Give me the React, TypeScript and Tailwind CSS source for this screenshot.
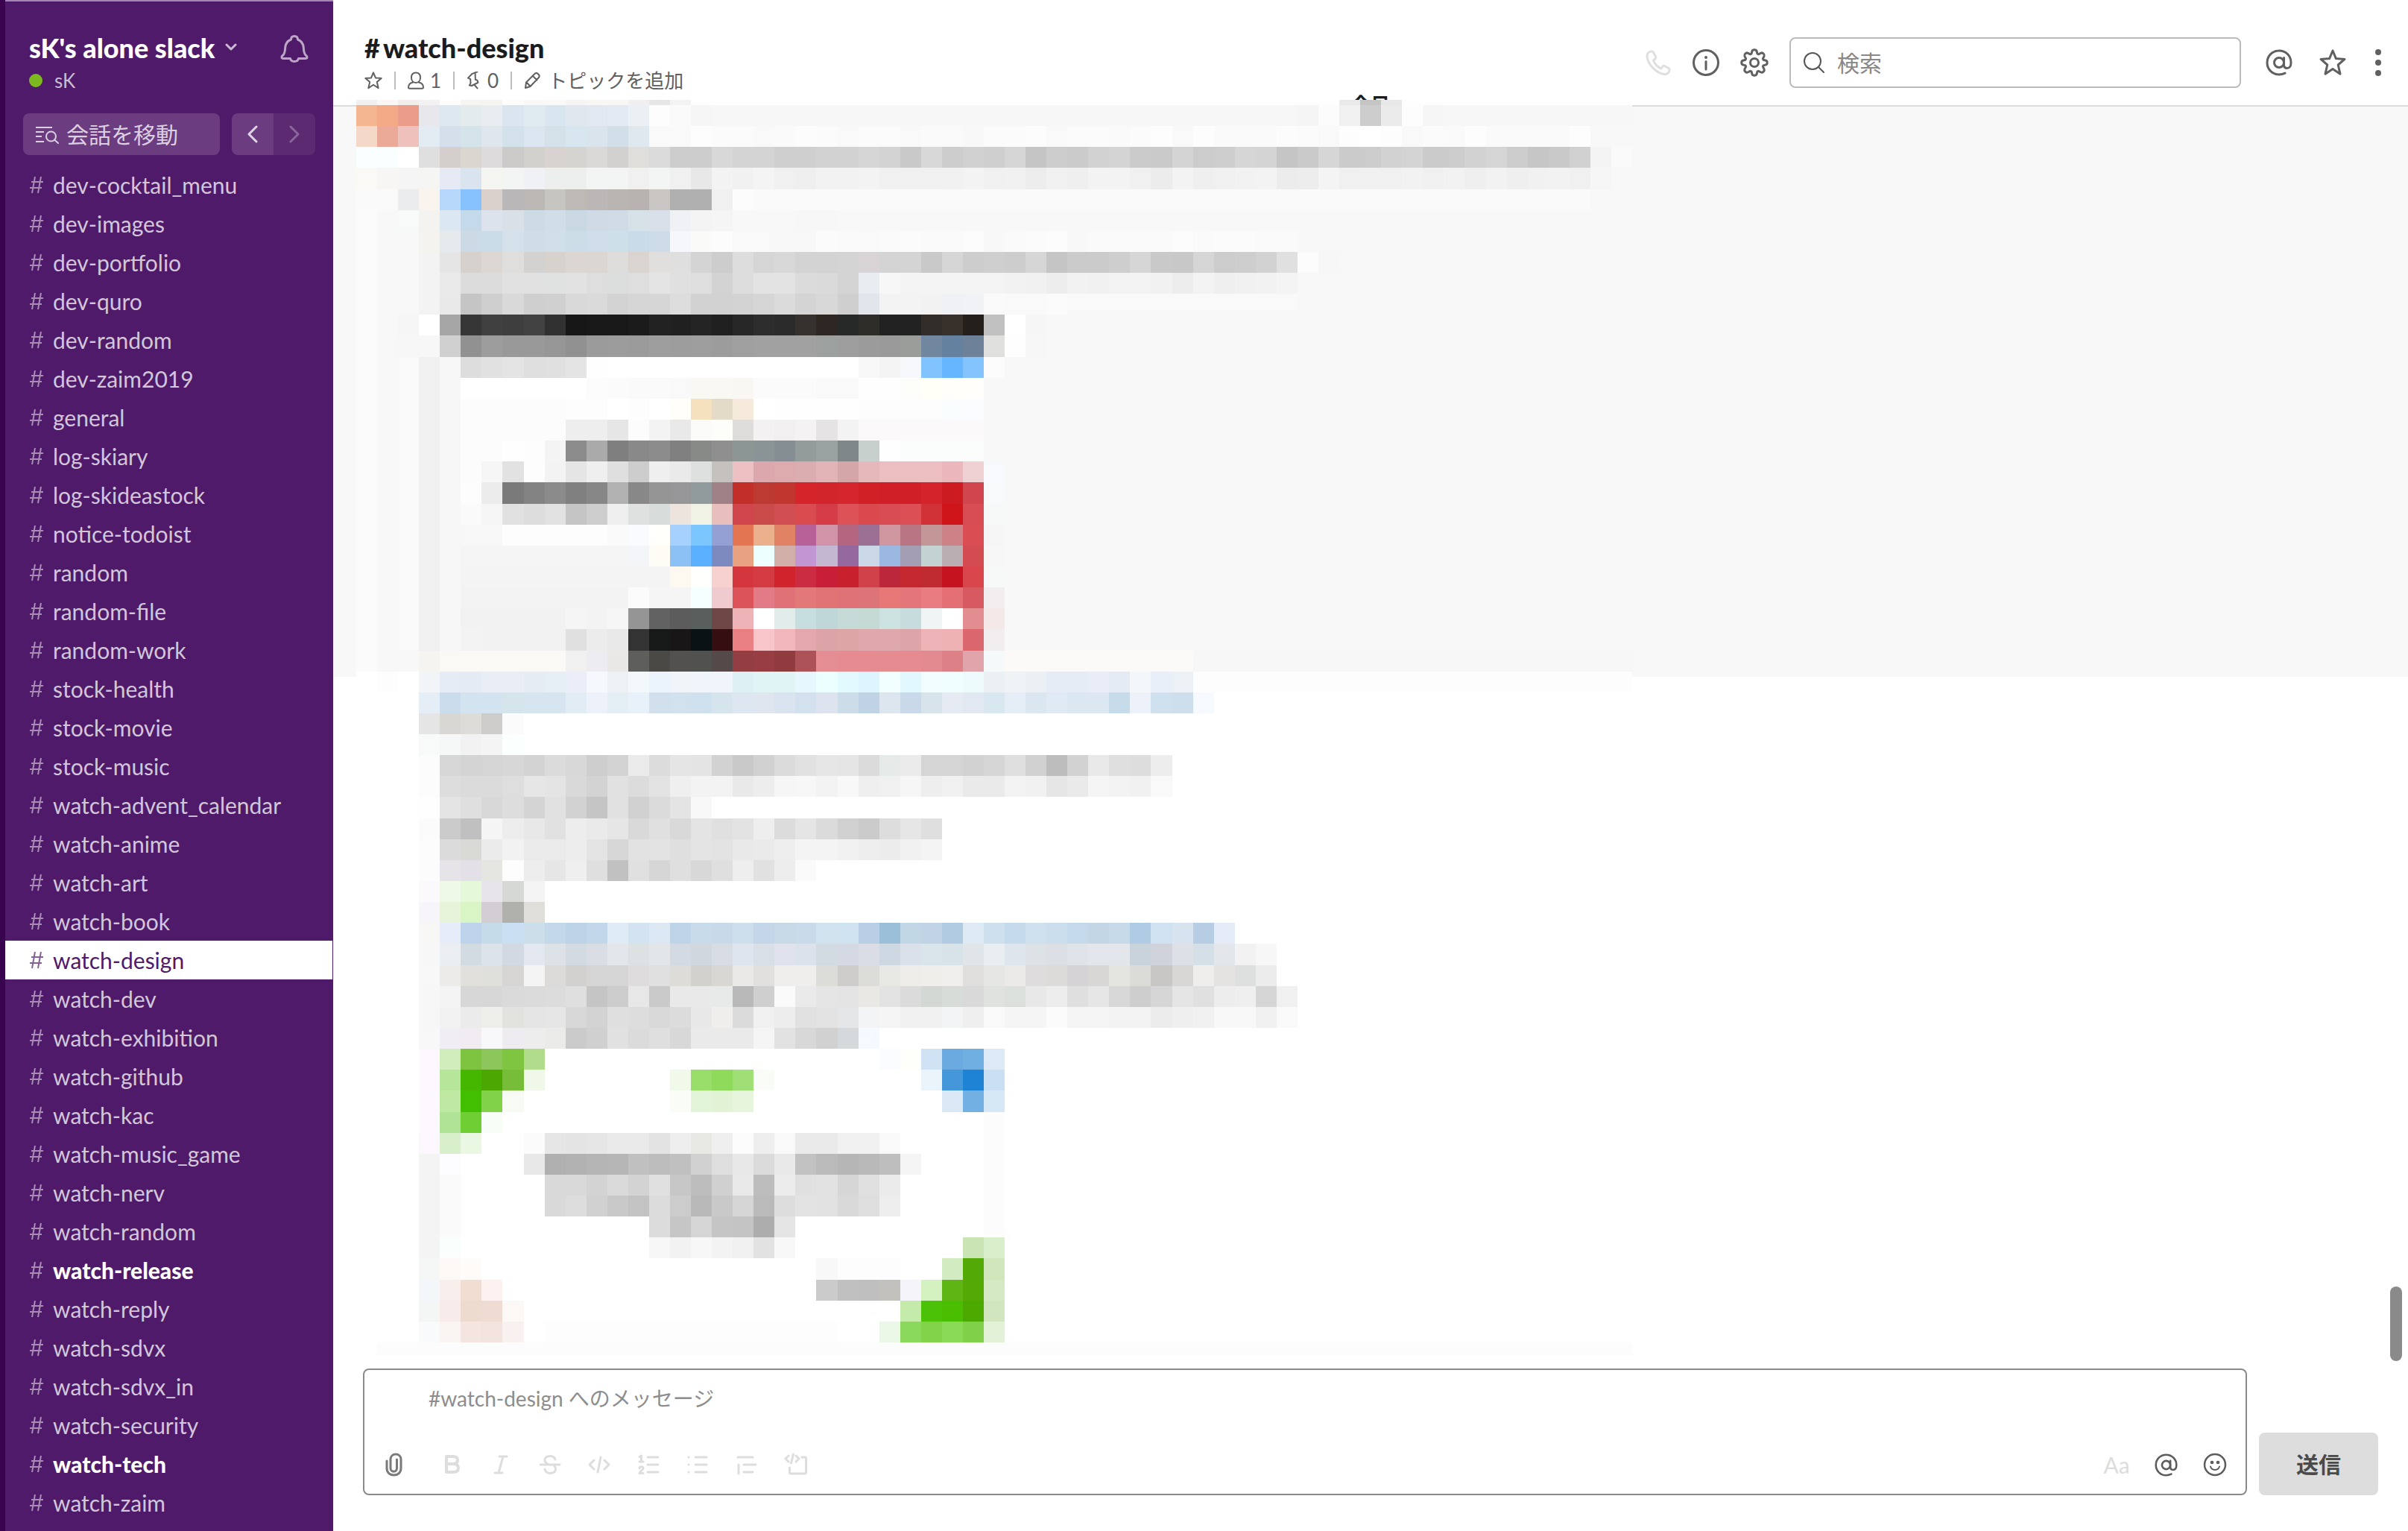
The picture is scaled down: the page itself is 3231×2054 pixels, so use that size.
import React from 'react';

const FONT = "font-['Lato','Noto_Sans_CJK_JP',sans-serif]";

const channels: { name: string; unread?: boolean; active?: boolean }[] = [
  { name: 'dev-cocktail_menu' },
  { name: 'dev-images' },
  { name: 'dev-portfolio' },
  { name: 'dev-quro' },
  { name: 'dev-random' },
  { name: 'dev-zaim2019' },
  { name: 'general' },
  { name: 'log-skiary' },
  { name: 'log-skideastock' },
  { name: 'notice-todoist' },
  { name: 'random' },
  { name: 'random-file' },
  { name: 'random-work' },
  { name: 'stock-health' },
  { name: 'stock-movie' },
  { name: 'stock-music' },
  { name: 'watch-advent_calendar' },
  { name: 'watch-anime' },
  { name: 'watch-art' },
  { name: 'watch-book' },
  { name: 'watch-design', active: true },
  { name: 'watch-dev' },
  { name: 'watch-exhibition' },
  { name: 'watch-github' },
  { name: 'watch-kac' },
  { name: 'watch-music_game' },
  { name: 'watch-nerv' },
  { name: 'watch-random' },
  { name: 'watch-release', unread: true },
  { name: 'watch-reply' },
  { name: 'watch-sdvx' },
  { name: 'watch-sdvx_in' },
  { name: 'watch-security' },
  { name: 'watch-tech', unread: true },
  { name: 'watch-zaim' },
];

/*
 * Pixelated message contents. Each string is one row of cells:
 * "xx" is a grey level, "xxxxxx" a colour, "_" an empty cell,
 * "*n" repeats a cell and "@n" jumps to column n.
 */
const L = 'fb f8 f9 f0 f7';
const topRow =
  'f0 f8f7f5 f2eeeb f3f1f2 fe f6f5f2*2 fdfdfb f8f8f9 faf8f8 f6f4f4 f9f7f4*2 f1eff0 e7 f3 fe*31 ea c5 e8 fe*11';
const rows: string[] = [
  'f3b691 f4aa86 ec9d8a e8e8ec dde8f1 e4ebed e8edf1 dae5ef dfebf0 d9e5ef e0e7ef e1e8f1 e3eaf3 ebf0f4 fd fa f6 f7*28 f5 fc f0 cd eb fd f6 f7*9',
  'f5d9c8 ebaa98 eec1bc e4ecf3 d4dfeb d5e3eb dfe6ee d3e2ea dbe6f0 d4e1e9 d8e6ef d9e4ec d2dfe8 dfe7ef f9*2 fd fb*2 f9 fa fc fb f9 fb*2 f9 fa*2 f8 fb*2 fc f9 fb*2 fa fb fd f9 fd fa*3 fc fb f9 fd ff fd f9 fb fa fd fa*4 fd',
  'f9ffff*2 ff df d4cfcc dad7d1 dddbdc cccbc9 d2d1ce d8d2d1 d5d4d1 dad9d7 d2d1cf dfdedb db cd*2 d8 d4*2 cf*2 d2*2 d6 d3 c9 d8 cd d1 cf d6 c5 cd cb d2 d4 cb ca d4 cc ce d6 d4 c5 ca d6 cb cc d2 d4 cb cc d2 d5 cc c6 c9 d1 f4 fa',
  'faf9f6 f8f6f4 f5 f5f5f3 e6eaf4 dae4ef f5f5f2 f3f5f4 f0f1f4 edefee*2 f3f5f4*2 f0 f3f5f4 f0 e8 f3 f1 f4 f0 ef f2*2 f3 f0*3 f1 f3 f0 f1 ed f1 ef f3*2 f0 ec f3 ef f0 f2 f3 ec ed f4 f0*3 f2 f0 f2 ef f2 ef f1 f2 f0 f6',
  'fa*2 ebecee f9f4ed b7d7fb 87c2ff dad1cc b9b7b8 bbb8b6 c6c5c2 bdb9b5 bbb7b6 b9b5b3 b8b3b1 cac6c4 b0*2 f0 fc fa*40',
  'fb f8 f8faf9 f4f3ef dce8f1 c4daeb dce3ec dae0e8 cddbe4 d1dee8 cad8e4 d0dae4 d1dbe5 d6e1e8 d9e0e9 eff1f4 f4 f5 f8*3 f7*2',
  'fb f8*2 f4f3ef e5eaed cbdae5 c9dce8 d4e1eb cfdde9 d1dfe8 ccdde7 d0deec cddfe9 c9dae8 cedcea f5f7fb fafaf8 fc f9*2 f8*2 fb fa f9 fa fb fa*2 fc f8 fa fb fc f8 fa*4 fc fa fb*2 fa*2',
  'fb f8*2 f3 e5 d6d1cd dcd7d3 dfdedc d3d2d0 d8d2cf dbd6d2*2 dfdddb dad4d1 e1dfdd df d4 cd dd d5 d8 d3*2 d4 d8d3d5 d4*2 c9 d6 cd cf cd d6 c5 cb*2 ce d6 c9 c8 d5 cc ce d2 e0 fc f7',
  'fb f8*2 f3 ea dc*2 e1*2 e0e2e1 e2 de dcdedd de e4 e0 de d3 dd e3*2 db da d4 e8edf1 f7 f4*5 f2 f1 ed f2 f1 f3*2 f1 ed f3 ef f1 f2 f4',
  'fb f8*2 f3 e9 c5 cf d9 cf d0 d9 da d3 d6*2 dd d2*2 d3 d6 db d4 d8 cf e0e6eb f3*2 f2 eff1f4 f0f2f5 fa f9*2 fb f9*11',
  'fb f8 f6 ff a6 36 40 3e 42 31 17 18*2 1b 22 20 24 20 27 2d 2b 36302f 2e2623 272928 2e2d2a 22*2 332d29 38312b 251f1b c1 ff f6',
  'fb f8 f7*2 d0 91 9d 99*2 96 91 9b 9c 9b 9e 9d 9e 9c 9f a1*3 9ca09e 9e 9b 9a 9b9d9a 7187a0 6482a0 6d8199 e0e0de fe f7',
  L + ' dd e1 e4 de e0 e4 fe ff*12 f8 f4 f6f8fb 81c3ff 66b6ff 83c4ff fc f8',
  L + ' ff*6 fc fb fa*2 f9 f9f8f3 f9f8f2 f8f7f4 fb*3 f9*2 fe*2 fdfdfa fffff8 fffefa*2',
  L + ' fc*5 fd*2 ff fd ff fffef8 f5e1bd e4dac8 f5eadc ff fe*4 fd*4 fafdfd fafcff',
  L + ' fc*5 ee*2 e6 fc f3 e9 fbfcf9 fdfdfa dedddb f3f1f2 f1eff0 f4f2f3 e5e3e4 f4f3f4 fbf9fa*6',
  L + ' fc*2 fe fd f4 8c aa 7f 89 8c 80 888a87 8f 8c9694 8a9497 858e92 939c9a 9aa2a1 7f8789 c8d0ce fe fbfdfc*4',
  L + ' fc f6 e2 fd f3 e5 ef df cd ef ea dde0de c5c1bf edc1c4 dda8ad ddaaae dcadb0 e2b4b7 d4a6a9 e7b8bb ecbec1*3 ecb7bc efd0d3 f7f9fd',
  L + ' fd ec 7a 83 8b 80 87 b1 88 95 969698 919a9d a08187 c22f29 bd3a33 c1372f d5242a d2242b d5262d d12127 d01f27*2 d4232b cc1b21 d1464e f7f9fb',
  L + ' fa f6 e1 dd e2 c5 ce ef dfe0e0 d8dcda ece4dd f0f2e6 e8bfbd d1454d cb4a4a d14e53 d94b4e d63c47 dc5257 d9494e d94c53 db4f55 d13237 d0151a d84c53 f7f9f8',
  L + ' f8*2 fd*5 fa fafbff fffffb a6d1ff 7cc6ff 949fd3 e37553 ebb08c e08263 b86199 d193a7 b4657f 9c6f94 d0969f b97583 c39697 cd8288 da4d53 f6',
  L + ' f5*8 f3f5f8 fffbf5 8cc1f6 5ab0ff 7c8abf e9a281 edffff d3afaa c196d1 c3b7d1 9568a0 cad7e6 9bb8e3 a49eb4 c3d3d1 bbaeb3 d24c51 f7',
  L + ' f4*10 fdf9f1 fffffd f6d1cd d4363d d43a41 d0232c cb2c42 c81e37 c8202c d04149 bc273b c5272e be2a30 c5141f d8464c f7f9f9',
  L + ' f3*8 fb f5*2 f5ffff efcace dc535a e27b85 e07176 e37878 e17374 df7276 dd7479 e77877 e4767b e87c80 e47076 d75a60 f2eef0',
  L + ' f2*5 f5 f3 f6 95 62 5c 585f5d 6e4746 edb3b7 ff e1eceb c7dee0 bfd7d8 c6dad8 c5d9d5 cde3e1 c6dcdd eff4f5 ff e28d90 f5e8e8',
  L + ' f3 f2*4 e0 ec e9 33 171918 181617 0a1213 340e10 e97f83 f8c5cb f2b7bc e4a8ac dda4a7 dda5a6 e0a8ab dfa8ab dda5a7 eeb3b6 eeb1b4 da666e f2eef0',
  'fb f8*2 f6f4f1 fbf9f6*6 f0 ededf1 e9e8e6 5e5e5c 4a4946 53514f 51524f 554a49 923e42 983e43 903b3d ad5358 e48e93 e68c91*4 e28a8f de8186 e2a4ab f5f9fa fbfaf8*9 f7*21',
  'ff fd ff f1f5f7 e5ecf5 e5ebf4 e8edf6*2 e5ecf4 e6eef6 ebeef9 f5f8fc edf1f6 f3f8fb ebf3fc f0f5f9 eff5fa*2 ddf1f4 e0f4f6*2 e6f7fe ecffff e1f9ff dcf5fe f1ffff e2f8ff f1fcff f1feff eefbfd ebf0f5 eff3f6 ebf0f4 e6ecf6*2 e9edf8 e4ebf4 f4f7fa e8eff8 ebf1f5 fd*21',
  '@3 e5eef7 cbddec d3e3f0 d3e3ef d6e4ec d6e5ef*2 e2ecf5 ecf1fa e3eef5 e8f0f9 d1e0ec d1e1ed cfe0ee d6e4ed dde6f1 e0e6f0 d9e4f0 d2e1ed dde4ef cddce9 bfd3e5 dde5ee c9d9e9 d8e4ec e6eaf3 e1e8f1 d9e7f1 e5edf6 dae7f1 dfeaf5 dbe8f1*2 c7dceb edf2fa cfe0ef cddfec f6fafe',
  '@3 e5 d9d7d4 dddcd9 cdccca fb',
  '@3 f7faf9 f6f8f7 f2 f4 fbfffe',
  '@3 fc d7 d4 d5 d7 d3 db d8 ce d3 eb dc e5 e4 d2 c9 d1 db e1 e6 e5 db e6eae8 eb d5*2 d2 d6 df d1 bd d2 e9 df dd ed',
  '@3 fc dd db*2 de e6 e4 d9 d3 e1 dc e3 ef f3*2 e9 ed f6 f7 f3 f8 ef f0 f6 ee f1 ea*2 f3 f1 e6 ea f5 f3 f1 f9',
  '@3 fe e4 df d8 dd d4 e1 d2 c5 e1 d1 db e4 f8',
  '@3 fb cb c0 f5 ed e8 e1 ed ea e6 d9 e0 d9 e4 e0 e3 ee dc e5 db d1 cb dd e6 df',
  '@3 fc db d9d9d5 eb f2 eb*2 ed e4 d7 e2 e3 df e4 e3 e9 ea ee f4*2 f1 ee ec f1 f4',
  '@3 fc e6e4e8 e3e1e7 e5e5e2 fd ed e6 ef df c1 e0 d6 df d8 df ee e1 ed fa',
  '@3 fbf9fc eff9e8 e5f9da e7e5ea d6d8d6 f4',
  '@3 f8f5fa e7f4da daf5c5 d3ced4 b0b0ad dfdedb',
  '@3 f8f7f5 e7edf8 bed3ec c5dbea cbdff3 cbdeea c3d8e8 bdd3e8 c2d7e9 dfebf5 d4e3f1 dce9f4 bed5e9 c8dbeb c8daea cddeed c3d7e9 c7d9e7 c9daea cfe2ee cfe2f0 b9cfe5 9bbfd9 c1d7e6 c0d4e5 b1cce2 ddeaf4 cedfed c5daeb cfe1ee cbdeed c4d9e9 c2d6e6 c6daea b0cce4 d0e2f1 d7e4ef b7cde3 e5ecf7',
  '@3 f7 ebeef2 d2dae2 dce3ea d2d9e2 e3e7f0 dde2e7 d3dae2 dadde3 e3e7eb dce1e3 e3e6e9 d3dae3 d0d7df d7dce5 dee5ee d9dfe7 e0e3ed dce2eb d2dae2 d5d9e3 dadde6 cdd8e2 dae1ea dae5eb d7e2e9 dfe5e9 e9eef2 dee5ed dde2e6 dce0e4 e0e4e9 e3e7eb*2 c8d3dc d0d3dc dde1e7 d5dfe8 e3e6ea f2 f7',
  '@3 f8 edebe9 e1e0dd dfdfdc d6d5d3 f4 dcdbd9 d2d1cf d5 d6 dfdcde e0 dddcd9 d2d1ce d8d7d4 eae9e7 e1e0de efeeec*2 dcdcd8 cecdcb dcdcd8 e7e7e4 eeedea efeeeb f0efed dfdedc e6e7e4 ebeae8 dfdcde dcdbda d6d3d6 d8d7d6 e4e4e1 dbdbd8 c8c7c5 d9d7d6 efeeec e4e3e1 dedfdf ec',
  '@3 f7 f4 d7*2 da db dc df c5 cd e7 ca e9*2 e7eae8 b9 cf fa ea e5 e4 e9e8e4 e3 db d4d8d5 d8dcd9 d9 dfe2df dce0dd e8 ed df e6 d8 ce d6 e5 e0 ed ef d6 f0',
  '@3 f7 f2 eb eeeeea e2e2de e5 e6 d8 d3 df dd d9 dc e8 efeeec db f0 ed e1 e3 e4e6e8 f2f4f6 f5 f1*2 f2f4f6 ef f9 f5*2 fb f5*2 f3*2 ec ef f1 f8*2 f1 f9',
  '@3 f8 f0eef4 f1ebf2 f8f8fb eeebf1 ed ebebe9 cb d0 e1 db df d8 ea*3 f5 e2 d8 d1 d5d9dc f4faff',
  '@3 fdf8ff d1edbb 7ec441 8dc65a 7fc542 b0dc8b @25 fafcff fefffa cfe3f4 6aaae0 70afe1 dbeaf6',
  '@3 fdf8ff b5e699 45b700 4aa800 77bd3a f0f8e9 @15 f1f9ea 99dd6a 8fd95b a0de76 fafdf7 @27 ebf3fb 4498da 1f83d5 c9e0f4',
  '@3 fdf8ff bfe8a3 41bf00 81d249 f7fbf3 @15 fafdf7 e3f5d8 e1f3d4 e8f5dd @28 dbe9f6 72afe3 d6e7f5',
  '@3 fdf8ff b0e395 70ce35 f7fdf7 @30 fc',
  '@3 fcf7fd d9efcb eaf7e2 @8 fb e6 e4 e6 ea*2 e3 ee e8e8e5 ef fc ee f9 ea*2 f1 f0 f9 @30 fc',
  '@3 f4 fdfdff @8 e8 b0 b2 b5 b6 c0 bd c0 d1 de e8 db e9 c2 ba b6 b9 be f5 @30 fc',
  '@3 f4 fa @9 d9*2 d3 da d3 e0 c7 bd d0 e9 bd ec e0 e2 d6 e0 eb @30 fc',
  '@3 f4 fa @9 d9 dd d1 c9 c3 dc cc b9 c9 d5 ba dd e3 e2 d9 de ee @30 fc',
  '@3 f4 fa @14 dc c6 d5 c5 c4 ad e5 @30 fc',
  '@3 f4 fafefd @14 f7 f2 f7 f3 f0 e2 f8 @29 cbe4b4 d9eeca',
  '@3 f5f7f6 fdf9f7 fefbf9 @22 f8 fd*3 @28 d3ebc0 53aa07 d0e7bb',
  '@3 f4f7f9 f8eeeb f2ddd2 fdf2ef @22 cb c0 bf c2c1be f6f4fb d3f2bf 5fb514 55a905 d6e9c5',
  '@3 f4f6f5 f7ecea eedbd0 f0dbd2 fcf8f5 @26 c5ebaa 4bc107 4abe00 4ca900 d1e6bf',
  '@3 f8fafc f9f5f2 f4e5e1 f2e3df f9f1ef @9 fd*14 @25 ecf8e7 8bd95c 82d34a 8ada57 81d049 e3f1d7',
];

type Cell = { col: number; span: number; fill: string };

function parseRow(row: string): Cell[] {
  const cells: Cell[] = [];
  let col = 0;
  for (const token of row.split(' ')) {
    if (token[0] === '@') {
      col = Number(token.slice(1));
      continue;
    }
    const [value, times] = token.split('*');
    const span = times ? Number(times) : 1;
    if (value !== '_') {
      cells.push({ col, span, fill: '#' + (value.length === 2 ? value + value + value : value) });
    }
    col += span;
  }
  return cells;
}

const colX = (c: number) => Math.round((c * 1712) / 61);
const rowY = (r: number) => 7 + Math.round((r * 1660) / 59);

function MosaicRow({ row, y, height }: { row: string; y: number; height: number }) {
  return (
    <g>
      {parseRow(row).map((c) => (
        <rect key={c.col} x={colX(c.col)} y={y} width={colX(c.col + c.span) - colX(c.col)} height={height} fill={c.fill} />
      ))}
    </g>
  );
}

function Mosaic() {
  return (
    <svg
      role="img"
      aria-label="メッセージ"
      width="1712"
      height="1684"
      viewBox="0 0 1712 1684"
      shapeRendering="crispEdges"
      className="relative -mt-[9px] ml-[31px] block shrink-0"
    >
      <MosaicRow row={topRow} y={0} height={7} />
      {rows.map((row, r) => (
        <MosaicRow key={r} row={row} y={rowY(r)} height={rowY(r + 1) - rowY(r)} />
      ))}
      <MosaicRow row="@1 fc*60" y={1667} height={17} />
    </svg>
  );
}

type IconProps = { children: React.ReactNode; w?: number; h?: number; sw?: number; className?: string };

function Icon({ children, w = 36, h = 36, sw = 3, className = '' }: IconProps) {
  return (
    <svg
      aria-hidden="true"
      width={w}
      height={h}
      viewBox={`0 0 ${w} ${h}`}
      fill="none"
      stroke="currentColor"
      strokeWidth={sw}
      strokeLinecap="round"
      strokeLinejoin="round"
      className={`block shrink-0 ${className}`}
    >
      {children}
    </svg>
  );
}

const StarPath = () => (
  <path d="M18 2l4.4 10.6L34 13.4l-8.8 7.6 2.8 12.2L18 26.600l-10 6.600 2.800-12.200L2 13.400l11.600-.8z" />
);

const AtPath = () => (
  <>
    <circle cx="18" cy="18" r="6.500" />
    <path d="M24.500 11.500v9.500c0 3 1.800 4.500 4.300 4.500 3.200 0 5.200-3 5.200-7.500C34 8.800 27 2 18 2S2 9 2 18s7 16 16 16c3 0 5.500-.6 8-1.900" />
  </>
);

function HashIcon() {
  return (
    <Icon w={20} h={26} sw={2}>
      <path d="M8 2L4 24M16 2l-4 22M3 9h16M1 17h16" strokeLinecap="butt" />
    </Icon>
  );
}

function Sidebar() {
  return (
    <aside className="flex w-[447px] shrink-0 flex-col overflow-hidden border-l-[7px] border-[#3a0350] bg-[#4f1a69] shadow-[inset_0_2px_0_#a287b0]">
      <div className="flex h-[152px] shrink-0 items-start justify-between pt-10 pr-8 pl-8">
        <div>
          <button type="button" className="flex h-12 items-center gap-3.5 text-4xl font-black text-white">
            <span className="whitespace-nowrap">sK's alone slack</span>
            <Icon w={16} h={12} sw={3} className="text-[#cabad2]">
              <path d="M2 2l6 6 6-6" />
            </Icon>
          </button>
          <div className="flex h-10 items-center gap-4 text-[26px] text-[#cabad2]">
            <span className="size-[18px] rounded-full bg-[#7cba1f]" />
            <span>sK</span>
          </div>
        </div>
        <button type="button" aria-label="通知" className="mt-1.5 text-[#bba6c6]">
          <Icon w={40} h={40} sw={3}>
            <path d="M15.500 7c0-3 1.800-4.500 4.500-4.500s4.500 1.500 4.500 4.500C29.500 9 32 13 32.300 18c.3 6 .9 8.500 3.200 10.200 2 1.500 2.500 4.300-1 4.300h-9c-.6 2.700-2.500 4-5.500 4s-4.900-1.300-5.500-4h-9c-3.500 0-3-2.800-1-4.300C6.800 26.500 7.400 24 7.700 18 8 13 10.500 9 15.500 7z" />
          </Icon>
        </button>
      </div>

      <div className="flex h-14 shrink-0 gap-4 pr-6 pl-6">
        <button type="button" className="flex flex-1 items-center gap-2.5 rounded-lg bg-[#6b3c7f] pl-4 text-[30px] text-[#dccfe2]">
          <Icon w={32} h={28} sw={2}>
            <path d="M1 5h22M1 11h11M1 17h8M1 24h11" strokeLinecap="butt" />
            <circle cx="21.500" cy="17" r="6.500" />
            <path d="M26 21.500l5 4.500" />
          </Icon>
          <span className="whitespace-nowrap">会話を移動</span>
        </button>
        <div className="flex overflow-hidden rounded-lg">
          <button type="button" aria-label="戻る" className="grid w-14 place-items-center bg-[#6b3c7f] text-[#e0d5e5]">
            <Icon w={14} h={24} sw={3}>
              <path d="M12 2L2 12l10 10" />
            </Icon>
          </button>
          <button type="button" aria-label="進む" className="grid w-14 place-items-center bg-[#5c2a71] text-[#88659a]">
            <Icon w={14} h={24} sw={3}>
              <path d="M2 2l10 10L2 22" />
            </Icon>
          </button>
        </div>
      </div>

      <nav aria-label="チャンネル" className="mt-3.5">
        <ul>
          {channels.map((c) => (
            <li key={c.name}>
              <a
                href="#channel"
                aria-current={c.active ? 'page' : undefined}
                className={
                  'mr-px flex h-[52px] items-center gap-3 pl-8 text-[30px] whitespace-nowrap ' +
                  (c.active
                    ? 'bg-white text-[#4f1a69]'
                    : c.unread
                      ? 'font-black text-white'
                      : 'text-[#d3c6da]')
                }
              >
                <span className={c.active ? 'text-[#84609a]' : 'text-[#a78cb5]'}>
                  <HashIcon />
                </span>
                <span>{c.name}</span>
              </a>
            </li>
          ))}
        </ul>
      </nav>
    </aside>
  );
}

function Divider() {
  return <span className="mx-4 h-6 w-0.5 shrink-0 bg-[#bdbdbd]" />;
}

function Header() {
  return (
    <header className="flex h-[143px] shrink-0 items-start justify-between border-b-2 border-[#dddddd] pr-[30px] pl-[42px]">
      <div className="pt-10">
        <h1 className="flex h-12 gap-1 text-4xl/[48px] font-black text-[#1d1c1d]">
          <span>#</span>
          <span>watch-design</span>
        </h1>
        <div className="flex h-10 items-center text-[26px] text-[#616061]">
          <button type="button" aria-label="スターを付ける">
            <svg aria-hidden="true" width="24" height="24" viewBox="0 0 36 36" fill="none" stroke="currentColor" strokeWidth="3" strokeLinejoin="round">
              <StarPath />
            </svg>
          </button>
          <Divider />
          <button type="button" className="flex items-center gap-2">
            <Icon w={22} h={24} sw={2}>
              <path d="M11 1.500c4 0 6 2.700 6 6.500s-2.300 7-6 7-6-3.200-6-7 2-6.500 6-6.500zM7 14.500C3 15.500 1 18 1 21c0 1.200.6 1.800 1.800 1.800h16.400c1.200 0 1.800-.6 1.800-1.800 0-3-2-5.500-6-6.500" />
            </Icon>
            1
          </button>
          <Divider />
          <button type="button" className="flex items-center gap-2">
            <Icon w={20} h={24} sw={2}>
              <path d="M8 3l8-2M8.500 3L2.500 7.500l3 2L5 15l-2 2.500 3 1 9-3-.5-3-2.500-1.500L13 2M9.500 17.500L13 23" transform="rotate(-8 10 12)" />
            </Icon>
            0
          </button>
          <Divider />
          <button type="button" className="flex items-center gap-2.5 whitespace-nowrap">
            <Icon w={22} h={24} sw={2}>
              <path d="M2 22l1-7.500L14.500 3c1.200-1.300 3-1.200 4.200 0l1 1c1.200 1.200 1.200 2.900 0 4.200L8.500 20zM12 6l5.500 5.500M3.500 14.500l5 5.300" />
            </Icon>
            トピックを追加
          </button>
        </div>
      </div>

      <div className="mt-[50px] flex h-[68px] items-center text-[#616061]">
        <button type="button" aria-label="通話" disabled className="text-[#dfdfdf]">
          <Icon w={36} h={36} sw={3}>
            <path d="M8.500 3C5 3.500 2.500 6 3 10c1.500 11 12 21.500 22.500 23.500 4 .7 7-1.500 7.500-5 .2-1.500-.3-2.500-1.500-3.200l-4.500-2.600c-1.300-.7-2.500-.4-3.300.8l-1.700 2.500c-4.500-1.500-9-6.500-10.500-11l2.300-2c1-1 1.200-2 .7-3.200L11.800 5C11.200 3.500 10 2.800 8.500 3z" />
          </Icon>
        </button>
        <button type="button" aria-label="会話の詳細" className="ml-7">
          <Icon w={36} h={36} sw={3}>
            <circle cx="18" cy="18" r="16.500" />
            <path d="M18 16.500V27" />
            <circle cx="18" cy="11" r="1" fill="currentColor" strokeWidth="2" />
          </Icon>
        </button>
        <button type="button" aria-label="設定" className="ml-7">
          <Icon w={38} h={38} sw={3}>
            <circle cx="19" cy="19" r="5.500" />
            <path d="M16 3.500c.7-2.300 5.300-2.300 6 0l1 3.700 1.500.6 3.400-1.700c2.200-1 5.200 2 4.200 4.200l-1.700 3.400.6 1.500 3.500 1c2.300.7 2.300 5 0 5.700l-3.500 1-.6 1.500 1.700 3.400c1 2.200-2 5.200-4.200 4.200l-3.400-1.700-1.500.6-1 3.600c-.7 2.300-5.300 2.300-6 0l-1-3.600-1.500-.6-3.400 1.700c-2.200 1-5.200-2-4.200-4.200l1.700-3.400-.6-1.500-3.500-1c-2.300-.7-2.300-5 0-5.700l3.500-1 .6-1.500-1.700-3.400c-1-2.200 2-5.200 4.200-4.200l3.400 1.700 1.500-.6z" />
          </Icon>
        </button>
        <label className="ml-7 flex h-[68px] w-[606px] items-center gap-4 rounded-lg border-2 border-[#bbbbbb] bg-white pl-4">
          <Icon w={30} h={30} sw={2} className="text-[#555555]">
            <circle cx="13" cy="13" r="11" />
            <path d="M21 21l7 7" />
          </Icon>
          <input
            type="search"
            aria-label="検索"
            placeholder="検索"
            className="min-w-0 flex-1 bg-transparent text-[30px] outline-none placeholder:text-[#888888]"
          />
        </label>
        <button type="button" aria-label="メンション" className="ml-8">
          <Icon w={38} h={38} sw={3}>
            <g transform="translate(1 1)"><AtPath /></g>
          </Icon>
        </button>
        <button type="button" aria-label="スター付き" className="ml-[34px]">
          <Icon w={38} h={38} sw={3}>
            <g transform="translate(1 1)"><StarPath /></g>
          </Icon>
        </button>
        <button type="button" aria-label="その他" className="ml-8">
          <Icon w={20} h={38} sw={0}>
            <g fill="currentColor">
              <circle cx="10" cy="5" r="4" />
              <circle cx="10" cy="19" r="4" />
              <circle cx="10" cy="33" r="4" />
            </g>
          </Icon>
        </button>
      </div>
    </header>
  );
}

const tools: { label: string; icon: React.ReactNode }[] = [
  {
    label: '太字',
    icon: <path d="M9 5h9c4 0 6 2 6 5s-2 5-6 5H9zM9 15h10c4 0 6 2.300 6 5.500S23 26 19 26H9z" strokeWidth="4" />,
  },
  { label: '斜体', icon: <path d="M14 5h10M8 27h10M19 5l-6 22" strokeWidth="3" /> },
  {
    label: '取り消し線',
    icon: <path d="M3 16h26M23 9c-1-3-3.500-4.500-7-4.500-4 0-7 2-7 5.500 0 3 2.500 4.500 5 6M9 22c.8 3.500 3.500 5.500 7 5.500 4.500 0 7.500-2 7.500-5.800 0-1.500-.5-2.700-1.500-3.700" />,
  },
  { label: 'コード', icon: <path d="M9 10l-6 6 6 6M23 10l6 6-6 6M18 6l-4 20" /> },
  {
    label: '番号付きリスト',
    icon: <path d="M15 6h14M15 16h14M15 26h14M4 5.500L6.500 4v8M4 12h5M4 21c0-3 5-3 5 0 0 2-5 4-5 6.500h5" />,
  },
  {
    label: '箇条書き',
    icon: <path d="M13 6h15M13 16h15M13 26h15M4 6h.1M4 16h.1M4 26h.1" strokeWidth="3" />,
  },
  { label: '引用', icon: <path d="M4 6h20M12 16h16M12 26h12M5 16v12" /> },
  {
    label: 'コードブロック',
    icon: <path d="M6 4L2 8l4 4M16 4l4 4-4 4M12.500 2l-3 12M24 6h4c1 0 1.500.5 1.500 1.500v19c0 1-.5 1.500-1.500 1.500H9c-1 0-1.500-.5-1.500-1.500V20" />,
  },
];

function Composer() {
  return (
    <form className="flex shrink-0 items-end gap-4 pt-[18px] pr-10 pb-12 pl-10">
      <div className="flex h-[170px] flex-1 flex-col justify-between rounded-lg border-2 border-[#8a8a8a] bg-white">
        <textarea
          aria-label="メッセージ"
          rows={1}
          placeholder="#watch-design へのメッセージ"
          className="mt-3.5 ml-[86px] h-12 resize-none overflow-hidden bg-transparent text-[28px]/[48px] outline-none placeholder:text-[#8d8d8d]"
        />
        <div className="mb-1.5 flex h-[66px] items-center pr-2 pl-2">
          <button type="button" aria-label="ファイルを添付" className="grid w-16 place-items-center text-[#7a7a7a]">
            <Icon w={24} h={32} sw={3}>
              <path d="M2 11v10c0 5.500 4 9 9.500 9S21 26.500 21 21V9c0-4-2.800-7-7-7S7 5 7 9v12c0 2.500 1.800 4.200 4.300 4.200S15.500 23.500 15.500 21V9" />
            </Icon>
          </button>
          <div className="ml-3 flex text-[#dddddd]">
            {tools.map((t) => (
              <button key={t.label} type="button" aria-label={t.label} className="grid w-[66px] place-items-center">
                <Icon w={32} h={32} sw={3}>{t.icon}</Icon>
              </button>
            ))}
          </div>
          <div className="ml-auto flex text-[#5c5c5c]">
            <button type="button" className="grid w-[66px] place-items-center text-[30px] text-[#dddddd]">Aa</button>
            <button type="button" aria-label="メンションする" className="grid w-[66px] place-items-center">
              <svg aria-hidden="true" width="31" height="31" viewBox="0 0 36 36" fill="none" stroke="currentColor" strokeWidth="3" strokeLinecap="round">
                <AtPath />
              </svg>
            </button>
            <button type="button" aria-label="絵文字" className="grid w-[66px] place-items-center">
              <Icon w={32} h={32} sw={2}>
                <circle cx="16" cy="16" r="14" strokeWidth="2.500" />
                <circle cx="12" cy="13" r="2.300" fill="currentColor" strokeWidth="0" />
                <circle cx="20" cy="13" r="2.300" fill="currentColor" strokeWidth="0" />
                <path d="M10 18.500c1 3 3.200 4.500 6 4.500s5-1.500 6-4.500" />
              </Icon>
            </button>
          </div>
        </div>
      </div>
      <button type="button" className="h-[84px] w-40 rounded-lg bg-[#dddddd] text-[30px] font-bold text-[#4a4a4a]">送信</button>
    </form>
  );
}

export default function App() {
  return (
    <div className={`flex h-screen overflow-hidden bg-white ${FONT}`}>
      <Sidebar />
      <main className="flex min-w-0 flex-1 flex-col">
        <Header />
        <section aria-label="メッセージ一覧" className="relative min-h-0 flex-1">
          <div className="absolute inset-x-0 top-0 h-[765px] bg-[#f8f8f8]" />
          <span className="absolute -top-[18px] left-[1366px] text-[26px]/[30px] font-bold text-[#1d1c1d]">今日</span>
          <Mosaic />
          <div className="absolute right-2 bottom-[-8px] h-[100px] w-4 rounded-full bg-[#8a8a8a]" />
        </section>
        <Composer />
      </main>
    </div>
  );
}
